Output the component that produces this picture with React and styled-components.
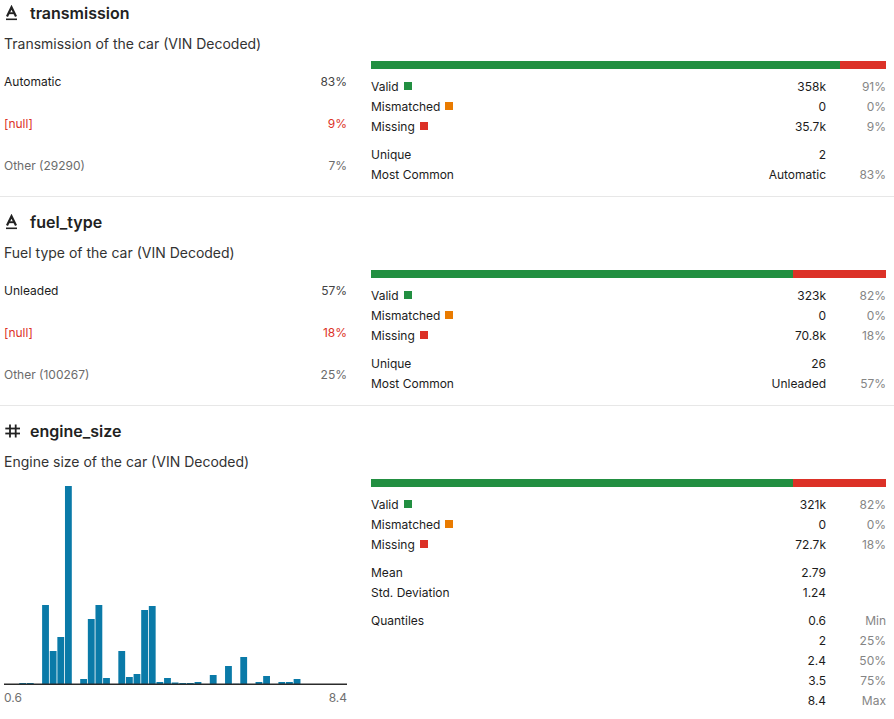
import React from "react";
import styled, { createGlobalStyle } from "styled-components";

const Global = createGlobalStyle`
  html, body { margin: 0; padding: 0; background: #fff; }
  body { font-family: Inter, "Noto Sans", "Liberation Sans", sans-serif; color: #1c1c1c; }
`;

const C = {
  green: "#228f41",
  orange: "#e97b00",
  red: "#dc3127",
  blue: "#0a7aa8",
};

const Page = styled.div`
  padding: 0 8px 0 4px;
`;

const Section = styled.section`
  padding: ${(p) => (p.$first ? "0" : "12px")} 8px 11px 4px;
  border-bottom: ${(p) => (p.$last ? "none" : "1px solid #e7e7e7")};
  margin: 0 -8px 0 -4px;
`;

const Header = styled.div`
  display: flex;
  align-items: center;
  gap: 10px;
  height: 26px;
  font-size: 16px;
  font-weight: 600;
  color: #222;
`;

const IconBox = styled.span`
  display: inline-flex;
  width: 16px;
  height: 16px;
  color: #222;
`;

const Description = styled.div`
  margin-top: 8px;
  font-size: 14px;
  line-height: 20px;
  color: #333;
`;

const Body = styled.div`
  display: grid;
  grid-template-columns: 343px 1fr;
  column-gap: 24px;
  margin-top: 7px;
`;

const ValueList = styled.div`
  display: flex;
  flex-direction: column;
  gap: 2px;
`;

const ValueRow = styled.div`
  display: flex;
  justify-content: space-between;
  align-items: center;
  height: 40px;
  font-size: 12px;
  color: ${(p) => (p.$kind === "null" ? C.red : p.$kind === "other" ? "#6b6b6b" : "#1c1c1c")};
`;

const ValuePct = styled.span`
  color: ${(p) => (p.$kind === "null" ? C.red : p.$kind === "other" ? "#6b6b6b" : "#444")};
`;

const StatsCol = styled.div`
  display: flex;
  flex-direction: column;
`;

const Bar = styled.div`
  display: flex;
  height: 8px;
  margin-bottom: 7px;
`;

const BarSeg = styled.div`
  height: 100%;
  background: ${(p) => p.$color};
`;

const Group = styled.div`
  display: flex;
  flex-direction: column;
  & + & { margin-top: 8px; }
`;

const StatRow = styled.div`
  display: grid;
  grid-template-columns: 1fr auto 60px;
  align-items: center;
  height: 20px;
  font-size: 12px;
  color: #1c1c1c;
`;

const StatLabel = styled.span`
  display: flex;
  align-items: center;
  gap: 5px;
`;

const Swatch = styled.span`
  width: 8px;
  height: 8px;
  background: ${(p) => p.$color};
`;

const StatValue = styled.span`
  text-align: right;
`;

const StatPct = styled.span`
  text-align: right;
  color: #858585;
`;

const ChartWrap = styled.div`
  display: flex;
  flex-direction: column;
`;

const Axis = styled.div`
  display: flex;
  justify-content: space-between;
  margin-top: 5px;
  font-size: 12px;
  line-height: 16px;
  color: #707070;
`;

const StringIcon = () => (
  <IconBox>
    <svg width="16" height="16" viewBox="0 0 16 16" fill="none" stroke="currentColor">
      <path d="M3 11.4 L7.5 2.2 L12 11.4" strokeWidth="2.2" strokeLinejoin="miter" />
      <path d="M4.8 8.2 H10.2" strokeWidth="1.9" />
      <path d="M2 14.3 H13" strokeWidth="1.6" />
    </svg>
  </IconBox>
);

const NumberIcon = () => (
  <IconBox>
    <svg width="16" height="16" viewBox="0 0 16 16" fill="none" stroke="currentColor" strokeWidth="1.8">
      <path d="M6 1.5 V14.5" />
      <path d="M11.7 1.5 V14.5" />
      <path d="M1.3 5.5 H16" />
      <path d="M1.3 10.5 H16" />
    </svg>
  </IconBox>
);

const bins = [
  0, 0, 1, 1, 0, 79, 33, 47, 198, 0, 5, 65, 79, 6, 0, 33, 7, 10, 74, 78, 2, 6, 1.5, 1, 1, 2, 0, 9, 0, 18,
  0.6, 27, 0, 2, 8, 0, 2, 2, 5, 0, 0, 0, 0, 0, 0,
];

const Histogram = () => {
  const W = 343;
  const H = 206;
  const base = 205;
  const bw = W / bins.length;
  return (
    <svg width={W} height={H} viewBox={`0 0 ${W} ${H}`}>
      {bins.map((h, i) =>
        h > 0 ? (
          <rect
            key={i}
            x={i * bw}
            y={base - h}
            width={bw - 0.8}
            height={h}
            fill={h < 1 ? "#9cc9dd" : C.blue}
          />
        ) : null
      )}
      <line x1="0" x2={W} y1={base + 0.2} y2={base + 0.2} stroke="#2b2b2b" strokeWidth="1.4" />
    </svg>
  );
};

const columns = [
  {
    name: "transmission",
    type: "string",
    desc: "Transmission of the car (VIN Decoded)",
    values: [
      { label: "Automatic", pct: "83%", kind: "normal" },
      { label: "[null]", pct: "9%", kind: "null" },
      { label: "Other (29290)", pct: "7%", kind: "other" },
    ],
    split: [91, 0, 9],
    quality: [
      ["358k", "91%"],
      ["0", "0%"],
      ["35.7k", "9%"],
    ],
    extra: [
      [
        ["Unique", "2", ""],
        ["Most Common", "Automatic", "83%"],
      ],
    ],
  },
  {
    name: "fuel_type",
    type: "string",
    desc: "Fuel type of the car (VIN Decoded)",
    values: [
      { label: "Unleaded", pct: "57%", kind: "normal" },
      { label: "[null]", pct: "18%", kind: "null" },
      { label: "Other (100267)", pct: "25%", kind: "other" },
    ],
    split: [82, 0, 18],
    quality: [
      ["323k", "82%"],
      ["0", "0%"],
      ["70.8k", "18%"],
    ],
    extra: [
      [
        ["Unique", "26", ""],
        ["Most Common", "Unleaded", "57%"],
      ],
    ],
  },
  {
    name: "engine_size",
    type: "number",
    desc: "Engine size of the car (VIN Decoded)",
    split: [82, 0, 18],
    quality: [
      ["321k", "82%"],
      ["0", "0%"],
      ["72.7k", "18%"],
    ],
    extra: [
      [
        ["Mean", "2.79", ""],
        ["Std. Deviation", "1.24", ""],
      ],
      [
        ["Quantiles", "0.6", "Min"],
        ["", "2", "25%"],
        ["", "2.4", "50%"],
        ["", "3.5", "75%"],
        ["", "8.4", "Max"],
      ],
    ],
  },
];

const qualityMeta = [
  ["Valid", C.green],
  ["Mismatched", C.orange],
  ["Missing", C.red],
];

export default function App() {
  return (
    <>
      <Global />
      <Page>
        {columns.map((col, ci) => (
          <Section key={col.name} $first={ci === 0} $last={ci === columns.length - 1}>
            <Header>
              {col.type === "string" ? <StringIcon /> : <NumberIcon />}
              <span>{col.name}</span>
            </Header>
            <Description>{col.desc}</Description>
            <Body>
              {col.type === "string" ? (
                <ValueList>
                  {col.values.map((v) => (
                    <ValueRow key={v.label} $kind={v.kind}>
                      <span>{v.label}</span>
                      <ValuePct $kind={v.kind}>{v.pct}</ValuePct>
                    </ValueRow>
                  ))}
                </ValueList>
              ) : (
                <ChartWrap>
                  <Histogram />
                  <Axis>
                    <span>0.6</span>
                    <span>8.4</span>
                  </Axis>
                </ChartWrap>
              )}
              <StatsCol>
                <Bar>
                  {col.split.map((s, i) =>
                    s > 0 ? <BarSeg key={i} $color={qualityMeta[i][1]} style={{ width: `${s}%` }} /> : null
                  )}
                </Bar>
                <Group>
                  {col.quality.map((q, i) => (
                    <StatRow key={i}>
                      <StatLabel>
                        {qualityMeta[i][0]}
                        <Swatch $color={qualityMeta[i][1]} />
                      </StatLabel>
                      <StatValue>{q[0]}</StatValue>
                      <StatPct>{q[1]}</StatPct>
                    </StatRow>
                  ))}
                </Group>
                {col.extra.map((g, gi) => (
                  <Group key={gi}>
                    {g.map((r, ri) => (
                      <StatRow key={ri}>
                        <StatLabel>{r[0]}</StatLabel>
                        <StatValue>{r[1]}</StatValue>
                        <StatPct>{r[2]}</StatPct>
                      </StatRow>
                    ))}
                  </Group>
                ))}
              </StatsCol>
            </Body>
          </Section>
        ))}
      </Page>
    </>
  );
}
